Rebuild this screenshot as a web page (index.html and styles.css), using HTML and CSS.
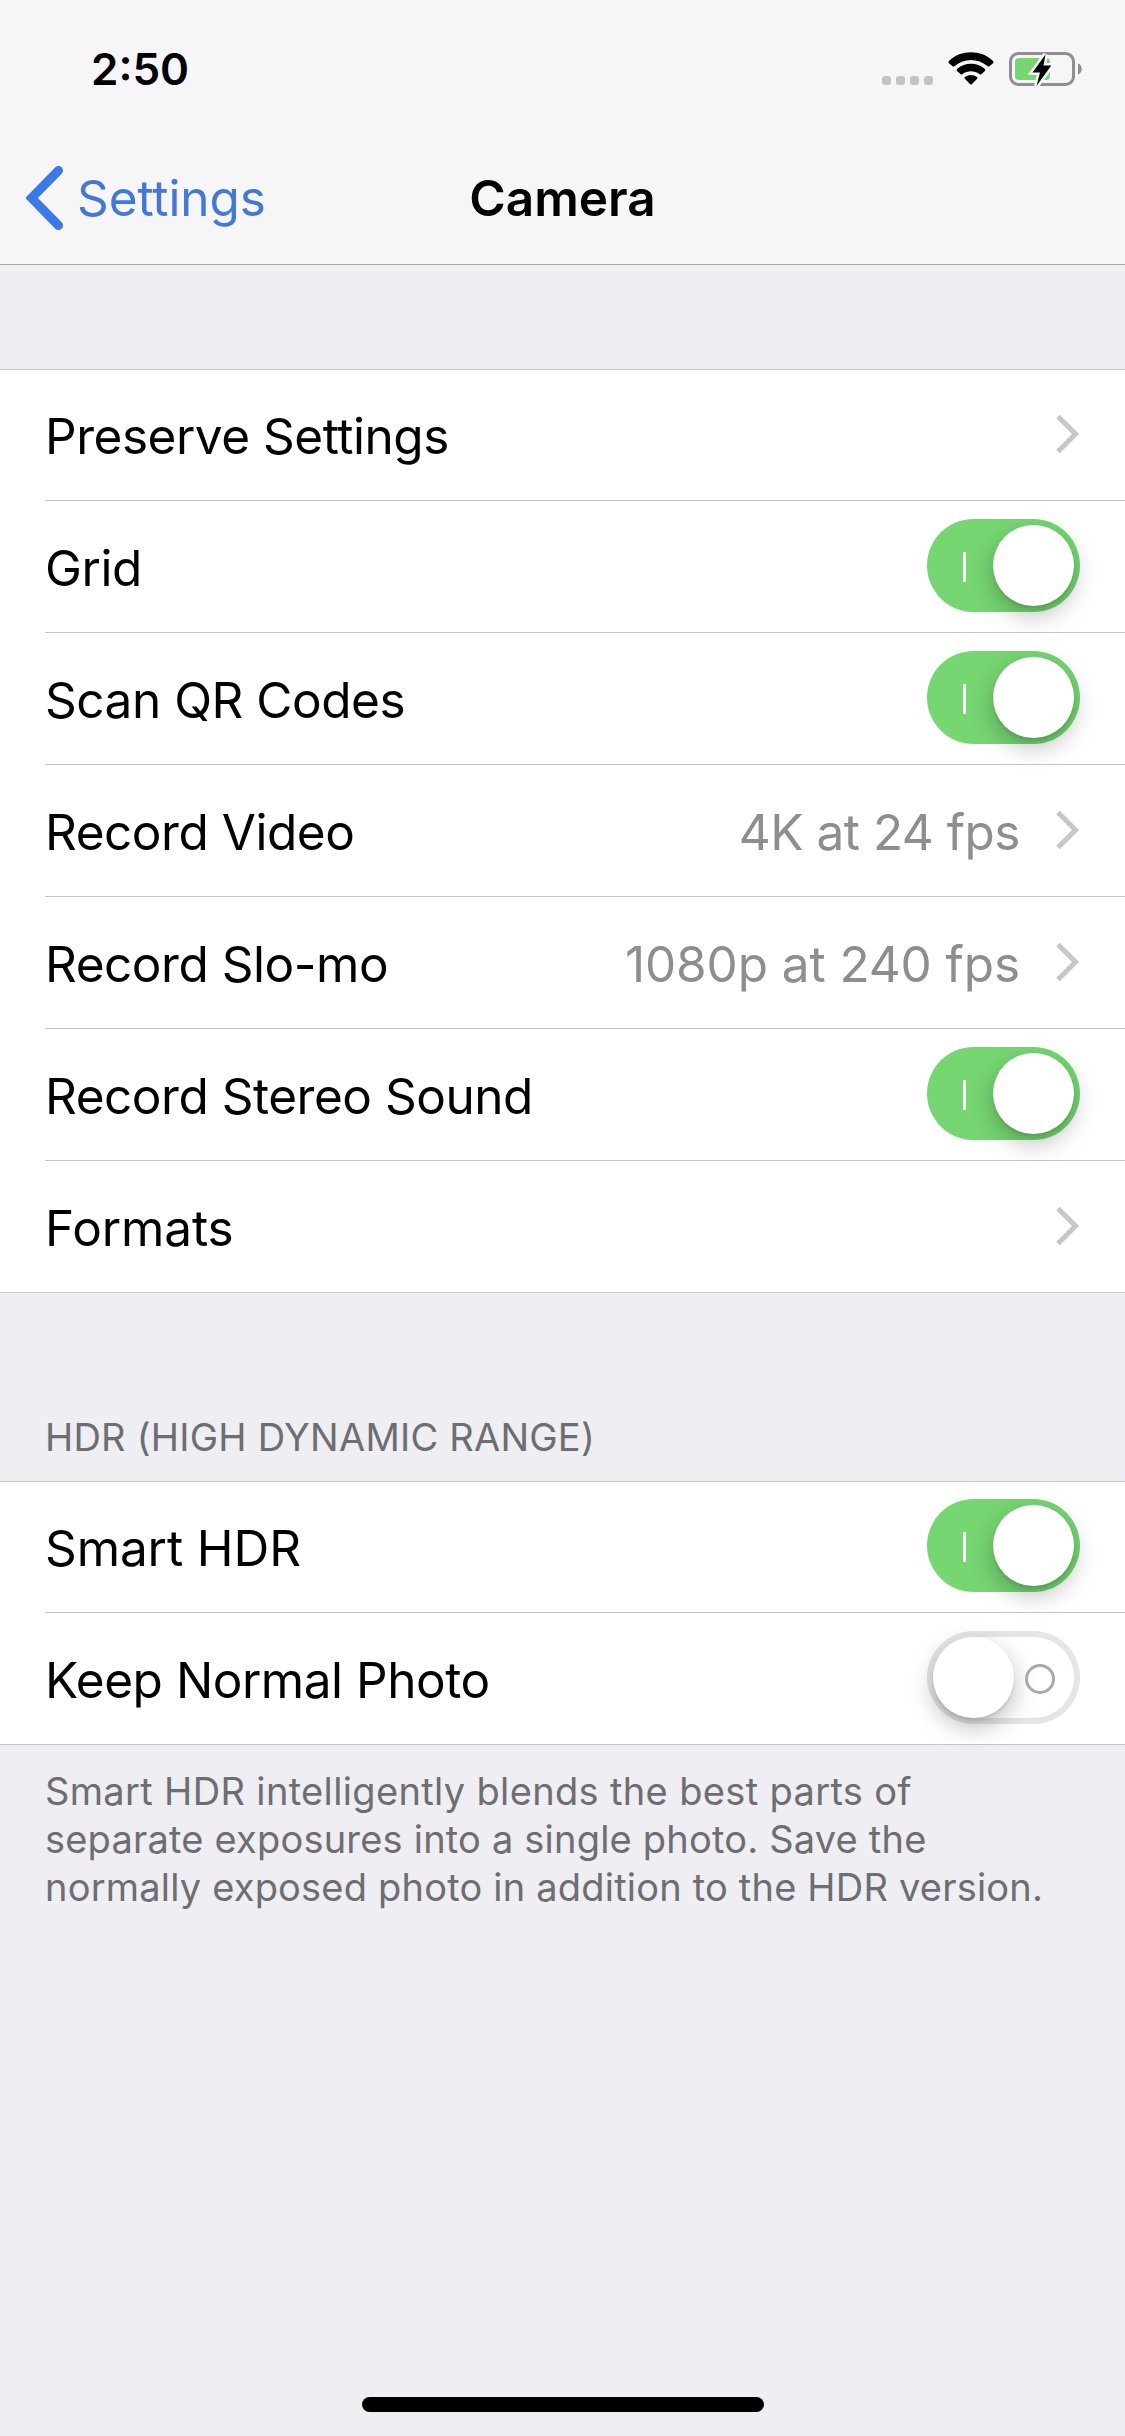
FILE: index.html
```html
<!DOCTYPE html>
<html lang="en">
<head>
    <meta charset="UTF-8">
    <meta name="viewport" content="width=device-width, initial-scale=1.0">
    <title>Camera</title>
    <link rel="stylesheet" href="styles.css">
</head>

<body>
    <!--status bar and nav bar-->
    <header class="top">
        <div class="statusBar">
            <span class="time">2:50</span>
            <div class="statusIcons">
                <div class="dots"><i></i><i></i><i></i><i></i></div>
                <svg class="wifi" width="46" height="34" viewBox="0 0 46 34">
                    <path d="M1.200 8.700 C13 -2.600 33 -2.600 44.800 8.700 Q46.300 10 45 11.200 L41.700 14 Q40.600 15 39.400 14 C30 5.900 16 5.900 6.600 14 Q5.400 15 4.300 14 L1 11.200 Q-0.300 10 1.200 8.700 Z"/>
                    <path d="M9.300 16.800 C17 10 29 10 36.700 16.800 Q38 18 36.900 19.100 L33.600 22 Q32.600 23 31.400 22 C26.500 18.300 19.500 18.300 14.600 22 Q13.400 23 12.400 22 L9.100 19.100 Q8 18 9.300 16.800 Z"/>
                    <path d="M17 25 C20.500 22.200 25.500 22.200 29 25 Q30 25.900 29.200 26.700 L24 32 Q23 33 22 32 L16.800 26.700 Q16 25.900 17 25 Z"/>
                </svg>
                <svg class="battery" width="73" height="36" viewBox="0 0 73 36">
                    <rect x="1.500" y="2.500" width="63" height="31" rx="8" fill="none" stroke="#8f8f93" stroke-width="3"/>
                    <rect x="6" y="7" width="35" height="22" rx="4" fill="#76d672"/>
                    <path d="M69 12.500 C74 14 74 22 69 23.500 Z" fill="#8f8f93"/>
                    <path d="M36.500 3.500 L23.500 21.500 H31 L27.500 35 L42.300 14.500 H34.500 Z" fill="#000" stroke="#f6f6f8" stroke-width="5" paint-order="stroke"/>
                </svg>
            </div>
        </div>
        <nav class="navBar">
            <a class="back">
                <svg width="37" height="64" viewBox="0 0 37 64">
                    <path d="M32.500 4.500 L5.500 32 L32.500 59.500" fill="none" stroke="#3b79e8" stroke-width="9" stroke-linecap="round"/>
                </svg>
                <span>Settings</span>
            </a>
            <h1>Camera</h1>
        </nav>
    </header>

    <main>
        <div class="group">
            <div class="row"><span class="label">Preserve Settings</span><svg class="chevron" viewBox="0 0 24 40"><path d="M2 2.500 L19.500 20 L2 37.500"/></svg></div>
            <div class="row"><span class="label">Grid</span><div class="toggle on"><div class="knob"></div></div></div>
            <div class="row"><span class="label">Scan QR Codes</span><div class="toggle on"><div class="knob"></div></div></div>
            <div class="row"><span class="label">Record Video</span><span class="value tight">4K at 24 fps</span><svg class="chevron" viewBox="0 0 24 40"><path d="M2 2.500 L19.500 20 L2 37.500"/></svg></div>
            <div class="row"><span class="label">Record Slo-mo</span><span class="value">1080p at 240 fps</span><svg class="chevron" viewBox="0 0 24 40"><path d="M2 2.500 L19.500 20 L2 37.500"/></svg></div>
            <div class="row"><span class="label">Record Stereo Sound</span><div class="toggle on"><div class="knob"></div></div></div>
            <div class="row"><span class="label loose">Formats</span><svg class="chevron" viewBox="0 0 24 40"><path d="M2 2.500 L19.500 20 L2 37.500"/></svg></div>
        </div>

        <h2>HDR (HIGH DYNAMIC RANGE)</h2>
        <div class="group">
            <div class="row"><span class="label loose">Smart HDR</span><div class="toggle on"><div class="knob"></div></div></div>
            <div class="row"><span class="label">Keep Normal Photo</span><div class="toggle"><div class="knob"></div></div></div>
        </div>
        <p class="note"><span>Smart HDR intelligently blends the best parts of</span><br>separate exposures into a single photo. Save the<br>normally exposed photo in addition to the HDR version.</p>
    </main>

    <div class="homeBar"></div>
</body>

</html>
```

FILE: styles.css
```css
*, *::before {
    box-sizing: border-box;
}
body {
    margin: 0;
    width: 1125px;
    height: 2436px;
    display: flex;
    flex-direction: column;
    background-color: #eeeef3;
    color: #000;
    font-family: Inter, "Liberation Sans", sans-serif;
    font-size: 49.5px;
    overflow: hidden;
}
.top {
    height: 265px;
    background-color: #f6f6f8;
    border-bottom: 1px solid #a9a9ac;
}
.statusBar {
    display: flex;
    justify-content: space-between;
    align-items: center;
    height: 132px;
    padding: 5px 43px 0 91px;
}
.time {
    font-size: 44px;
    font-weight: 600;
}
.statusIcons {
    display: flex;
    align-items: center;
}
.dots {
    display: flex;
    gap: 5px;
    margin-right: 15px;
    padding-top: 24px;
}
.dots i {
    width: 9px;
    height: 9px;
    border-radius: 3px;
    background-color: #c3c3c5;
}
.wifi {
    margin-right: 15px;
}
.navBar {
    display: grid;
    grid-template-columns: 1fr auto 1fr;
    align-items: center;
    height: 132px;
}
.back {
    display: flex;
    align-items: center;
    gap: 14px;
    margin-left: 26px;
    color: #4278d8;
    letter-spacing: -0.1px;
}
h1 {
    margin: 0;
    font-size: 49.5px;
    font-weight: 600;
}
.group {
    background-color: #fff;
    border-top: 1px solid #c6c6c9;
    border-bottom: 1px solid #c6c6c9;
}
main > .group:first-child {
    margin-top: 104px;
}
.row {
    display: flex;
    align-items: center;
    height: 132px;
    margin-left: 45px;
    padding-right: 45px;
    border-bottom: 1px solid #c6c6c9;
}
.row:first-child {
    height: 131px;
}
.row:last-child {
    height: 131px;
    border-bottom: none;
}
.label {
    flex: 1;
    padding-top: 2px;
    letter-spacing: -0.47px;
}
.loose {
    letter-spacing: -0.1px;
}
.value {
    padding-top: 2px;
    margin-right: 36px;
    color: #8e8e8e;
    letter-spacing: -0.1px;
}
.tight {
    letter-spacing: -0.5px;
}
.chevron {
    width: 24px;
    height: 40px;
    margin-bottom: 2px;
}
.chevron path {
    fill: none;
    stroke: #c7c7c7;
    stroke-width: 5;
}
.toggle {
    position: relative;
    display: flex;
    align-items: center;
    width: 153px;
    height: 93px;
    margin-bottom: 2px;
    padding: 6px;
    border-radius: 47px;
    box-shadow: inset 0 0 0 6px #e5e5e5;
}
.row:first-child .toggle {
    margin-bottom: 3px;
}
.toggle.on {
    justify-content: flex-end;
    background-color: #76d672;
    box-shadow: none;
}
.knob {
    width: 81px;
    height: 81px;
    border-radius: 50%;
    background-color: #fff;
    box-shadow: 0 9px 24px rgba(0, 0, 0, 0.26), 0 3px 3px rgba(0, 0, 0, 0.08);
}
/*circle mark for off, line for on*/
.toggle::before {
    content: "";
    position: absolute;
    left: 98px;
    top: 33px;
    width: 30px;
    height: 30px;
    border: 3px solid #a9a9a9;
    border-radius: 50%;
}
.toggle.on::before {
    left: 36px;
    width: 3px;
    border: none;
    border-radius: 0;
    background-color: #fff;
}
h2 {
    margin: 124px 0 0 45px;
    height: 64px;
    line-height: 40px;
    font-size: 38px;
    font-weight: 400;
    letter-spacing: 0.23px;
    color: #6d6d72;
}
.note {
    margin: 22px 0 0 45px;
    font-size: 38px;
    line-height: 48.2px;
    letter-spacing: 0.2px;
    color: #6d6d72;
}
.note span {
    letter-spacing: 0.35px;
}
.homeBar {
    width: 402px;
    height: 15px;
    margin: auto auto 24px;
    border-radius: 8px;
    background-color: #000;
}
```
